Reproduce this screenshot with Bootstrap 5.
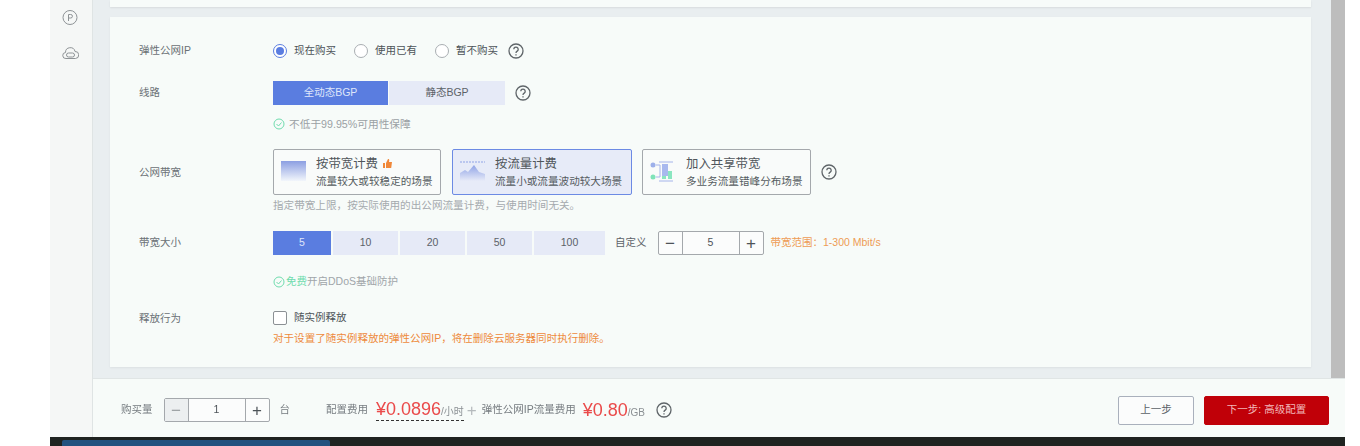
<!DOCTYPE html>
<html lang="zh-CN">
<head>
    <meta charset="UTF-8">
    <meta name="viewport" content="width=device-width, initial-scale=1.0">
    <title>弹性公网IP</title>
    <link rel="stylesheet" href="https://cdn.jsdelivr.net/npm/bootstrap@5.3.2/dist/css/bootstrap.min.css">
    <style>
        html, body { height: 446px; overflow: hidden; background: #fff; }
        body { font-family: "Liberation Sans", "Noto Sans CJK SC", sans-serif; font-size: 10.5px; color: #4d5358; }
        .page-wrap { margin-left: 50px; width: 1295px; height: 446px; filter: blur(.7px); }
        .body-row { height: 437px; }
        .upper { height: 378px; }
        .side-rail { width: 43px; background: #f5f7f6; border-right: 1px solid #dfe4e4; padding: 9px 2px 0 0; gap: 20px; }
        .side-rail svg { display: block; }
        .main-area { background: #e9eef0; padding: 0 20px 0 17px; }
        .top-stub { height: 7px; background: #f7fbf9; box-shadow: 0 1px 2px rgba(0,0,0,.08); }
        .form-panel { height: 350px; margin-top: 10px; background: #f7fbf9; padding-left: 29px; box-shadow: 0 1px 2px rgba(0,0,0,.06); }
        .scroll-track { width: 14px; background: #bdbdbd; }
        .form-line { display: flex; }
        .form-label-col { width: 134px; flex: none; color: #6b7176; }
        .line-ip { height: 34px; margin-top: 17px; align-items: center; }
        .line-route { height: 24px; margin-top: 13px; align-items: center; }
        .line-hint { height: 14px; margin-top: 12px; align-items: center; color: #9aa0a4; font-size: 10.7px; }
        .line-bill { height: 46px; margin-top: 18px; align-items: center; }
        .line-bill .form-label-col { padding-top: 2px; }
        .line-note { height: 12px; margin-top: 5px; align-items: center; color: #a5aaae; font-size: 10.6px; }
        .line-size { height: 24px; margin-top: 19px; align-items: center; }
        .line-ddos { height: 14px; margin-top: 20px; align-items: center; color: #a0a5a9; }
        .line-release { height: 16px; margin-top: 21px; align-items: center; }
        .line-release .form-label-col { padding-top: 2px; }
        .line-warn { height: 14px; margin-top: 6px; align-items: center; color: #ee8a3c; font-size: 10.55px; }
        .radio-item { display: flex; align-items: center; gap: 7px; margin-right: 18px; color: #4d5358; }
        .radio-dot { width: 14px; height: 14px; border-radius: 50%; border: 1px solid #a9aeb2; background: #fff; }
        .radio-dot.on { border-color: #5a7de0; display: flex; align-items: center; justify-content: center; }
        .radio-dot.on::after { content: ""; width: 8px; height: 8px; border-radius: 50%; background: #5a7de0; }
        .radio-last { margin-right: 10px; }
        .help-mark { flex: none; stroke-width: 1.3; }
        .help-route { margin-left: 10px; }
        .seg-btn { display: flex; align-items: center; justify-content: center; height: 24px; background: #e6eaf7; color: #5c6268; border-radius: 0; }
        .seg-btn.on { background: #5a7de0; color: #dfe6fb; }
        .seg-wide { width: 115px; }
        .seg-wide + .seg-wide { width: 116px; margin-left: 1px; }
        .seg-size { width: 65px; margin-right: 2px; }
        .seg-first { width: 58px; }
        .seg-last { width: 71px; margin-right: 0; }
        .bill-box { display: flex; align-items: center; width: 169px; height: 46px; margin-right: 10px; padding-left: 7px; border: 1px solid #a4a8ac; border-radius: 2px; background: #f9fbfa; }
        .bill-box.first-box { width: 168px; margin-right: 11px; }
        .bill-box.on { width: 180px; background: #e7ebf8; border-color: #6c8ae4; }
        .bill-box svg.bill-icon { flex: none; margin: 0 10px 2px 0; }
        .bill-box svg.bill-icon.shared-icon { margin-right: 11px; }
        .bill-title { font-size: 12.4px; line-height: 16px; color: #50565b; }
        .bill-sub { font-size: 10.6px; line-height: 14px; margin-top: 2px; color: #555b60; white-space: nowrap; }
        .num-box { display: flex; height: 24px; border: 1px solid #a4a8ac; border-radius: 2px; background: #fbfcfc; color: #4d5358; }
        .num-box > span { display: flex; align-items: center; justify-content: center; }
        .num-btn { width: 23px; font-size: 17px; font-weight: 300; line-height: 1; }
        .num-btn.dim { background: #eceff0; color: #9ba0a3; }
        .num-val { border-left: 1px solid #a4a8ac; border-right: 1px solid #a4a8ac; width: 58px; }
        .custom-label { margin: 0 11px 0 10px; color: #5c6268; }
        .range-note { margin-left: 7px; color: #ee9b55; }
        .free-text { color: #6fdcae; }
        .check-box { width: 14px; height: 14px; border: 1px solid #8b9094; border-radius: 2px; background: #fff; margin-right: 7px; }
        .foot-bar { height: 59px; background: #f7fbf9; border-top: 1px solid #e0e5e5; padding: 4px 0 0 28px; }
        .foot-label { color: #767c80; }
        .foot-qty { margin-right: 11px; }
        .foot-unit { margin: 0 36px 0 10px; }
        .foot-cost { margin-right: 8px; }
        .foot-traffic { margin-right: 7px; }
        .price-big { color: #ea4a4a; font-size: 18px; line-height: 16px; }
        .price-unit { color: #8b9094; font-size: 10px; }
        .dash-under { display: inline-flex; align-items: baseline; line-height: 16px; padding-top: 2px; border-bottom: 1px dashed #333; }
        .plus-sign { color: #b5babd; font-size: 17px; margin: 0 5px 0 3px; line-height: 1; font-weight: 300; }
        .btn-prev { width: 76px; height: 29px; padding: 0; background: #fbfcfc; border: 1px solid #a9b0bc; border-radius: 2px; color: #5c6268; font-size: 10.5px; }
        .btn-next { width: 125px; height: 29px; padding: 0; margin-left: 10px; margin-right: 16px; background: #c00008; border: 1px solid #c00008; border-radius: 2px; color: #f2b8ba; font-size: 10.5px; }
        .help-foot { margin-left: 11px; }
        .task-strip { height: 9px; background: #1f2320; padding-left: 12px; }
        .task-tab { width: 268px; height: 6px; margin-top: 3px; background: #22527f; border-radius: 2px 2px 0 0; }
    </style>
</head>
<body>
    <div class="page-wrap">
        <div class="body-row d-flex">
            <div class="side-rail d-flex flex-column align-items-center flex-shrink-0">
                <svg width="16" height="17" viewBox="0 0 16 17" fill="none" stroke="#8e9396"><circle cx="8" cy="8.500" r="7"/><path d="M6.500 12V5.500h2.200a1.600 1.600 0 0 1 0 3.500H6.500"/></svg>
                <svg width="17" height="14" viewBox="0 0 17 14" fill="none" stroke="#8e9396"><path d="M4 12.500a3 3 0 0 1-.5-6A4.800 4.800 0 0 1 13 5.500a3.500 3.500 0 0 1 .5 7z"/><rect x="4.500" y="7" width="8" height="4" rx="2"/></svg>
            </div>
            <div class="flex-grow-1">
                <div class="upper d-flex">
                    <div class="main-area flex-grow-1">
                        <div class="top-stub"></div>
                        <div class="form-panel overflow-hidden">
                            <div class="form-line line-ip">
                                <div class="form-label-col">弹性公网IP</div>
                                <div class="radio-item"><span class="radio-dot on"></span>现在购买</div>
                                <div class="radio-item"><span class="radio-dot"></span>使用已有</div>
                                <div class="radio-item radio-last"><span class="radio-dot"></span>暂不购买</div>
                                <svg class="help-mark" width="16" height="16" viewBox="0 0 16 16" fill="none" stroke="#5f6569"><circle cx="8" cy="8" r="7"/><path d="M5.800 6.300a2.200 2.200 0 1 1 3.400 1.800c-.8.500-1.200.9-1.200 1.900"/><path d="M8 11.300v1.200"/></svg>
                            </div>
                            <div class="form-line line-route">
                                <div class="form-label-col">线路</div>
                                <div class="seg-btn seg-wide on">全动态BGP</div>
                                <div class="seg-btn seg-wide">静态BGP</div>
                                <svg class="help-mark help-route" width="16" height="16" viewBox="0 0 16 16" fill="none" stroke="#5f6569"><circle cx="8" cy="8" r="7"/><path d="M5.800 6.300a2.200 2.200 0 1 1 3.400 1.800c-.8.500-1.200.9-1.200 1.900"/><path d="M8 11.300v1.200"/></svg>
                            </div>
                            <div class="form-line line-hint">
                                <div class="form-label-col"></div>
                                <svg class="me-1" width="12" height="12" viewBox="0 0 12 12" fill="none" stroke="#6fdcae"><circle cx="6" cy="6" r="5"/><path d="M3.500 6l2 2 3-3.500"/></svg>
                                <span>不低于99.95%可用性保障</span>
                            </div>
                            <div class="form-line line-bill">
                                <div class="form-label-col">公网带宽</div>
                                <div class="bill-box first-box">
                                    <svg class="bill-icon" width="25" height="20" viewBox="0 0 25 20"><defs><linearGradient id="g1" x1="0" y1="0" x2="0" y2="1"><stop offset="0" stop-color="#8c9fe2"/><stop offset="1" stop-color="#f2f6fb"/></linearGradient></defs><rect width="25" height="20" fill="url(#g1)"/></svg>
                                    <div>
                                        <div class="bill-title">按带宽计费 <svg width="11" height="11" viewBox="0 0 11 11" fill="#f0883a" style="margin:0 0 2px 1px"><path d="M1 5h2v5H1zM4 5l2-4c1 0 1.500.6 1.200 1.600L7 4h3l-.8 6H4z"/></svg></div>
                                        <div class="bill-sub">流量较大或较稳定的场景</div>
                                    </div>
                                </div>
                                <div class="bill-box on">
                                    <svg class="bill-icon" width="25" height="20" viewBox="0 0 25 20"><defs><linearGradient id="g2" x1="0" y1="0" x2="0" y2="1"><stop offset="0" stop-color="#8fa3e6"/><stop offset="1" stop-color="#e7ebf8"/></linearGradient></defs><path d="M0 1h25" stroke="#8fa3e6" stroke-dasharray="2 1"/><path d="M0 12l5-3 3 2 6-7 5 7 6 2v7H0z" fill="url(#g2)"/></svg>
                                    <div>
                                        <div class="bill-title">按流量计费</div>
                                        <div class="bill-sub">流量小或流量波动较大场景</div>
                                    </div>
                                </div>
                                <div class="bill-box">
                                    <svg class="bill-icon shared-icon" width="25" height="22" viewBox="0 0 25 22"><circle cx="3" cy="5" r="2.500" fill="#9db0ea"/><circle cx="3" cy="17" r="2.500" fill="#7fe3b8"/><path d="M6 5h4v12H6M9 2h14M9 21h14" stroke="#a5b4ea" fill="none"/><rect x="12" y="4" width="6" height="12" fill="#a9b9ee"/><rect x="18" y="11" width="4" height="8" fill="#8be6c0"/><rect x="12" y="16" width="4" height="3" fill="#8be6c0"/></svg>
                                    <div>
                                        <div class="bill-title">加入共享带宽</div>
                                        <div class="bill-sub">多业务流量错峰分布场景</div>
                                    </div>
                                </div>
                                <svg class="help-mark" width="16" height="16" viewBox="0 0 16 16" fill="none" stroke="#5f6569"><circle cx="8" cy="8" r="7"/><path d="M5.800 6.300a2.200 2.200 0 1 1 3.400 1.800c-.8.500-1.200.9-1.200 1.900"/><path d="M8 11.300v1.200"/></svg>
                            </div>
                            <div class="form-line line-note">
                                <div class="form-label-col"></div>
                                <span>指定带宽上限，按实际使用的出公网流量计费，与使用时间无关。</span>
                            </div>
                            <div class="form-line line-size">
                                <div class="form-label-col">带宽大小</div>
                                <div class="seg-btn seg-size seg-first on">5</div>
                                <div class="seg-btn seg-size">10</div>
                                <div class="seg-btn seg-size">20</div>
                                <div class="seg-btn seg-size">50</div>
                                <div class="seg-btn seg-size seg-last">100</div>
                                <span class="custom-label">自定义</span>
                                <div class="num-box">
                                    <span class="num-btn">−</span>
                                    <span class="num-val">5</span>
                                    <span class="num-btn">+</span>
                                </div>
                                <span class="range-note">带宽范围：1-300 Mbit/s</span>
                            </div>
                            <div class="form-line line-ddos">
                                <div class="form-label-col"></div>
                                <svg style="margin-right:1px" width="12" height="12" viewBox="0 0 12 12" fill="none" stroke="#6fdcae"><circle cx="6" cy="6" r="5"/><path d="M3.500 6l2 2 3-3.500"/></svg>
                                <span><span class="free-text">免费</span>开启DDoS基础防护</span>
                            </div>
                            <div class="form-line line-release">
                                <div class="form-label-col">释放行为</div>
                                <span class="check-box"></span>
                                <span>随实例释放</span>
                            </div>
                            <div class="form-line line-warn">
                                <div class="form-label-col"></div>
                                <span>对于设置了随实例释放的弹性公网IP，将在删除云服务器同时执行删除。</span>
                            </div>
                        </div>
                    </div>
                    <div class="scroll-track flex-shrink-0"></div>
                </div>
                <div class="foot-bar d-flex align-items-center">
                    <span class="foot-label foot-qty">购买量</span>
                    <div class="num-box">
                        <span class="num-btn dim">−</span>
                        <span class="num-val">1</span>
                        <span class="num-btn">+</span>
                    </div>
                    <span class="foot-label foot-unit">台</span>
                    <span class="foot-label foot-cost">配置费用</span>
                    <span class="dash-under"><span class="price-big">¥0.0896</span><span class="price-unit">/小时</span></span>
                    <span class="plus-sign">+</span>
                    <span class="foot-label foot-traffic">弹性公网IP流量费用</span>
                    <span class="price-big">¥0.80</span><span class="price-unit align-self-center pt-1">/GB</span>
                    <svg class="help-mark help-foot" width="16" height="16" viewBox="0 0 16 16" fill="none" stroke="#5f6569"><circle cx="8" cy="8" r="7"/><path d="M5.800 6.300a2.200 2.200 0 1 1 3.400 1.800c-.8.500-1.200.9-1.200 1.900"/><path d="M8 11.300v1.200"/></svg>
                    <button type="button" class="btn btn-prev ms-auto">上一步</button>
                    <button type="button" class="btn btn-next">下一步: 高级配置</button>
                </div>
            </div>
        </div>
        <div class="task-strip overflow-hidden"><div class="task-tab"></div></div>
    </div>
    <script src="https://cdn.jsdelivr.net/npm/bootstrap@5.3.2/dist/js/bootstrap.bundle.min.js"></script>
</body>
</html>
